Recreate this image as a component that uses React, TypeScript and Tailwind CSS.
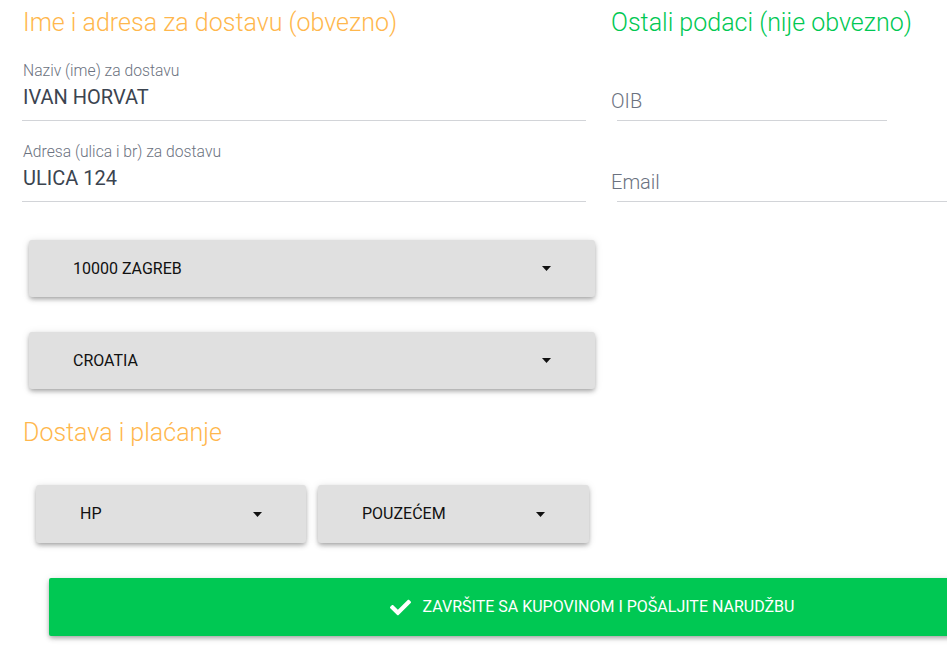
import React from "react";
import { FaCheck } from "react-icons/fa";

const shadow =
  "shadow-[0_3px_5px_0_rgba(0,0,0,0.14),0_1px_8px_0_rgba(0,0,0,0.10),0_2px_4px_-1px_rgba(0,0,0,0.22)]";

const Field = ({ label, value }: { label: string; value: string }) => (
  <div className="pt-[21px] pb-[10px] border-b border-[#d2d4d8] ml-[22px] w-[564px]">
    <div className="text-[15.7px] leading-[20px] font-light text-[#6b7280] pl-[1px]">{label}</div>
    <div className="mt-[4px] text-[20px] leading-[25px] text-[#3b4450] pl-[1px]">{value}</div>
  </div>
);

const OptionalField = ({ label, className }: { label: string; className: string }) => (
  <div className={`pt-[49px] pb-[7px] border-b border-[#d2d4d8] ${className}`}>
    <div className="-ml-[6px] text-[20px] leading-[24px] font-light text-[#6b7280]">{label}</div>
  </div>
);

const Caret = () => (
  <svg width="9" height="5" viewBox="0 0 9 5" className="shrink-0">
    <path d="M0 0h9L4.5 5z" fill="#111" />
  </svg>
);

const Select = ({ value, className }: { value: string; className: string }) => (
  <div
    className={`flex items-center justify-between bg-[#e0e0e0] rounded-[3px] pl-[44px] pr-[44px] ${shadow} ${className}`}
  >
    <span className="text-[16px] text-[#111]">{value}</span>
    <Caret />
  </div>
);

export default function App() {
  return (
    <div className="w-[947px] h-[659px] overflow-hidden bg-white font-['Roboto',sans-serif]">
      <div className="flex">
        {/* obvezno */}
        <div className="w-[600px] shrink-0">
          <h2 className="pt-[6px] pl-[23px] text-[25px] leading-[34px] font-light text-[#ffb74d]">
            Ime i adresa za dostavu (obvezno)
          </h2>
          <Field label="Naziv (ime) za dostavu" value="IVAN HORVAT" />
          <Field label="Adresa (ulica i br) za dostavu" value="ULICA 124" />

          <Select value="10000 ZAGREB" className="mt-[38px] ml-[29px] w-[566px] h-[57px]" />
          <Select value="CROATIA" className="mt-[35px] ml-[29px] w-[566px] h-[57px]" />

          <h2 className="mt-[27px] pl-[23px] text-[25px] leading-[34px] font-light text-[#ffb74d]">
            Dostava i plaćanje
          </h2>
          <div className="flex gap-[12px] mt-[35px] ml-[36px]">
            <Select value="HP" className="w-[270px] h-[58px]" />
            <Select value="POUZEĆEM" className="w-[271px] h-[58px]" />
          </div>
        </div>

        {/* nije obvezno */}
        <div className="flex-1">
          <h2 className="pt-[6px] pl-[11px] text-[25px] leading-[34px] font-light text-[#00c853] whitespace-nowrap">
            Ostali podaci (nije obvezno)
          </h2>
          <OptionalField label="OIB" className="ml-[17px] w-[270px]" />
          <OptionalField label="Email" className="ml-[17px]" />
        </div>
      </div>

      <button
        className={`mt-[35px] ml-[49px] w-[1086px] h-[58px] shrink-0 flex items-center justify-center gap-[12px] bg-[#00c853] rounded-[2px] text-white text-[16px] ${shadow}`}
      >
        <FaCheck className="w-[21px] h-[21px]" />
        <span>ZAVRŠITE SA KUPOVINOM I POŠALJITE NARUDŽBU</span>
      </button>
    </div>
  );
}
